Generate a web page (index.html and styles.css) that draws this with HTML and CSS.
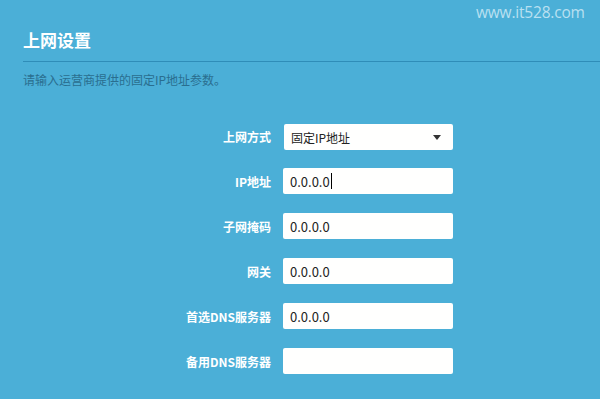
FILE: index.html
```html
<!DOCTYPE html>
<html lang="zh-CN">
<head>
<meta charset="utf-8">
<title>上网设置</title>
<link rel="stylesheet" href="styles.css">
</head>
<body>
<div class="page">
  <div class="watermark">www.it528.com</div>
  <header class="head">
    <h1 class="title">上网设置</h1>
  </header>
  <p class="desc">请输入运营商提供的固定IP地址参数。</p>
  <div class="form">
    <label class="lbl">上网方式</label>
    <div class="field select"><span>固定IP地址</span><svg class="arrow" width="8" height="5" viewBox="0 0 8 5"><path d="M0 0H8L4 5Z" fill="#333"/></svg></div>
    <label class="lbl">IP地址</label>
    <div class="field"><span>0.0.0.0</span><span class="caret"></span></div>
    <label class="lbl">子网掩码</label>
    <div class="field"><span>0.0.0.0</span></div>
    <label class="lbl">网关</label>
    <div class="field"><span>0.0.0.0</span></div>
    <label class="lbl">首选DNS服务器</label>
    <div class="field"><span>0.0.0.0</span></div>
    <label class="lbl">备用DNS服务器</label>
    <div class="field"></div>
  </div>
</div>
</body>
</html>
```

FILE: styles.css
```css
html, body {
  margin: 0;
  padding: 0;
  background: #4bafd7;
}
.page {
  position: relative;
  width: 600px;
  height: 399px;
  overflow: hidden;
  font-family: "Noto Sans CJK SC", "Noto Sans", sans-serif;
  background: #4bafd7;
}
.watermark {
  position: absolute;
  top: 1px;
  left: 476px;
  font-family: "Open Sans", "Noto Sans", sans-serif;
  font-size: 15.5px;
  color: #b9e0f1;
  letter-spacing: -0.2px;
}
.head {
  margin-left: 23px;
  padding-top: 27px;
  border-bottom: 1px solid #2f8db8;
  height: 34px;
}
.title {
  margin: 0;
  font-size: 17px;
  line-height: 26px;
  font-weight: bold;
  color: #ffffff;
}
.desc {
  margin: 10px 0 0 23px;
  font-size: 12px;
  line-height: 16px;
  color: #2a6e8f;
}
.form {
  display: grid;
  grid-template-columns: 271px 170px;
  column-gap: 12px;
  row-gap: 19px;
  margin-top: 36px;
  align-items: center;
}
.lbl {
  text-align: right;
  font-size: 12px;
  font-weight: bold;
  color: #ffffff;
}
.field {
  height: 26px;
  background: #fffffe;
  border-radius: 2px;
  display: flex;
  align-items: center;
  padding-left: 7px;
  font-size: 13px;
  color: #222;
  box-sizing: border-box;
}
.field.select {
  margin-left: 1px;
  margin-bottom: -1px;
  height: 26px;
  justify-content: space-between;
  padding-right: 12px;
  font-size: 12px;
}
.caret {
  display: inline-block;
  width: 1px;
  height: 16px;
  background: #000;
  margin-left: 1px;
}
.arrow {
  display: block;
}
```
